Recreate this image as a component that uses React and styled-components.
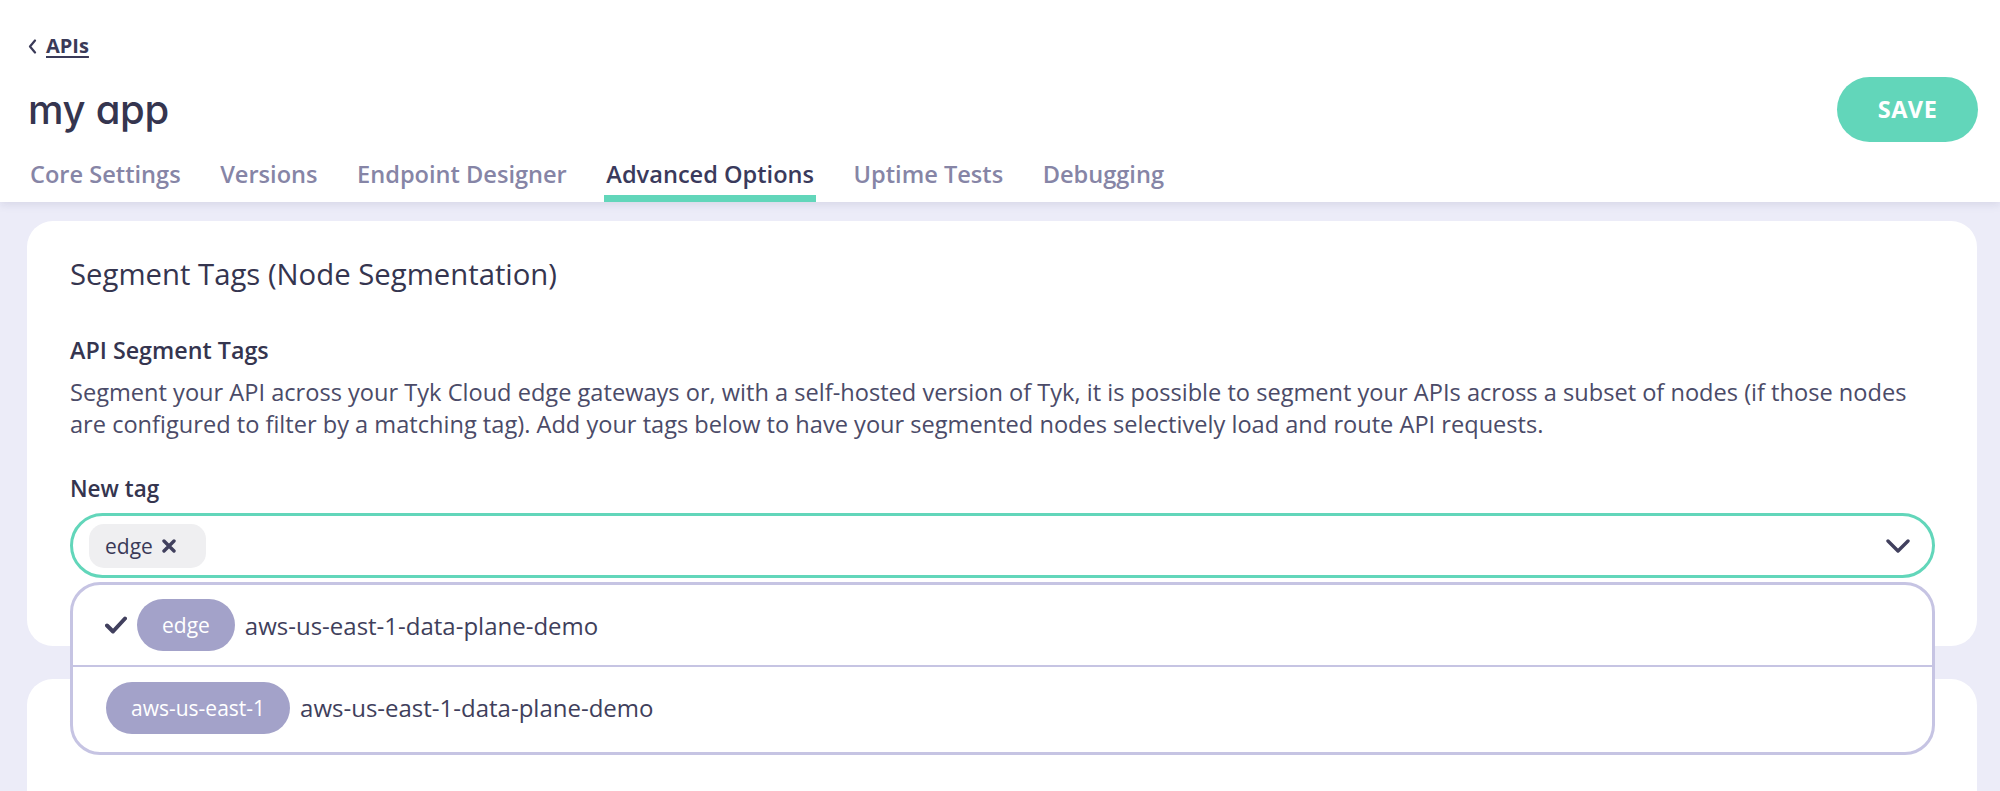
import React from "react";
import styled, { createGlobalStyle } from "styled-components";

const GlobalStyle = createGlobalStyle`
  html, body {
    margin: 0;
    padding: 0;
    background: #ececf8;
    font-family: "Open Sans", "Noto Sans", sans-serif;
    color: #3a3a58;
  }
  * { box-sizing: border-box; }
`;

const Page = styled.div`
  width: 2000px;
  height: 791px;
  overflow: hidden;
  background: #ececf8;
`;

const Header = styled.header`
  position: relative;
  z-index: 2;
  background: #fff;
  padding: 35px 22px 0 28px;
  box-shadow: 0 3px 8px rgba(70, 70, 120, 0.12);
  display: flex;
  flex-direction: column;
`;

const BackLink = styled.a`
  display: inline-flex;
  align-items: center;
  gap: 9px;
  align-self: flex-start;
  font-size: 20px;
  font-weight: 700;
  line-height: 22px;
  color: #3a3a58;
  text-decoration: underline;
  text-underline-offset: 3px;
  text-decoration-thickness: 1.5px;
`;

const TitleRow = styled.div`
  display: flex;
  align-items: center;
  justify-content: space-between;
  margin-top: 19px;
  height: 66px;
`;

const Title = styled.h1`
  margin: 0;
  font-family: "Inter", "Lato", sans-serif;
  font-feature-settings: "cv11" 1;
  font-weight: 500;
  font-size: 40px;
  letter-spacing: -0.3px;
  color: #35354f;
`;

const SaveButton = styled.button`
  width: 141px;
  height: 65px;
  border: none;
  border-radius: 33px;
  background: #62d6ba;
  color: #fff;
  font-family: "Open Sans", sans-serif;
  font-weight: 700;
  font-size: 23.5px;
  letter-spacing: 0.5px;
  cursor: pointer;
`;

const Tabs = styled.nav`
  display: flex;
  gap: 35.5px;
  margin-top: 17px;
`;

const Tab = styled.div`
  font-size: 23.6px;
  font-weight: 600;
  color: ${(p) => (p.$active ? "#3a3a5c" : "#8685a6")};
  padding: 0 2px 6px;
  border-bottom: 7px solid ${(p) => (p.$active ? "#62d6ba" : "transparent")};
  line-height: 30px;
`;

const Content = styled.main`
  display: flex;
  flex-direction: column;
  gap: 33px;
  padding: 19px 23px 0 27px;
`;

const Card = styled.section`
  background: #fff;
  border-radius: 26px;
  padding: ${(p) => p.$pad || "35px 42px 68px 43px"};
  position: relative;
  z-index: ${(p) => p.$z || 0};
`;

const CardTitle = styled.h2`
  margin: 0;
  font-size: 29.3px;
  font-weight: 500;
  line-height: 36px;
  color: #35354f;
`;

const SubTitle = styled.h3`
  margin: 43px 0 0;
  font-size: 23.3px;
  font-weight: 600;
  line-height: 30px;
  color: #35354f;
`;

const Description = styled.p`
  margin: 11px 0 0;
  font-size: 23.6px;
  line-height: 32px;
  color: #4b4b68;
`;

const FieldLabel = styled.label`
  display: block;
  margin-top: 34px;
  font-size: 22.5px;
  font-weight: 600;
  line-height: 30px;
  color: #35354f;
`;

const SelectWrap = styled.div`
  position: relative;
  margin-top: 9px;
`;

const SelectBox = styled.div`
  height: 65px;
  border: 3px solid #62d6ba;
  border-radius: 33px;
  display: flex;
  align-items: center;
  justify-content: space-between;
  padding: 0 22px 0 16px;
`;

const Chip = styled.span`
  display: inline-flex;
  align-items: center;
  gap: 9px;
  height: 44px;
  padding: 0 30px 0 16px;
  border-radius: 15px;
  background: #efeff1;
  font-size: 21px;
  color: #3a3a58;
`;

const Menu = styled.div`
  position: absolute;
  left: 0;
  right: 0;
  top: 69px;
  background: #fff;
  border: 3px solid #c6c4e3;
  border-radius: 30px;
  overflow: hidden;
  z-index: 5;
`;

const Option = styled.div`
  display: flex;
  align-items: center;
  gap: 10px;
  height: ${(p) => (p.$first ? "80px" : "87px")};
  padding: ${(p) => (p.$first ? "0 0 0 32px" : "0 0 4px 33px")};
  border-top: ${(p) => (p.$first ? "none" : "2px solid #c6c4e3")};
`;

const Pill = styled.span`
  display: inline-flex;
  align-items: center;
  justify-content: center;
  height: 52px;
  padding: 0 25px;
  border-radius: 26px;
  background: #a3a2c9;
  color: #fff;
  font-size: 21px;
`;

const OptionText = styled.span`
  font-size: 24px;
  font-weight: 500;
  color: #3f3f5c;
`;

const SecondTitle = styled.h2`
  margin: 0;
  font-size: 29px;
  font-weight: 500;
  line-height: 36px;
  color: #35354f;
`;

const Chevron = () => (
  <svg width="24" height="14" viewBox="0 0 24 14" fill="none">
    <path d="M2 2l10 10L22 2" stroke="#41405e" strokeWidth="3.4" strokeLinecap="round" strokeLinejoin="round" />
  </svg>
);

const Check = () => (
  <svg width="22" height="18" viewBox="0 0 22 18" fill="none">
    <path d="M2 9.5l6 6L20 2.5" stroke="#41405e" strokeWidth="4" strokeLinecap="round" strokeLinejoin="round" />
  </svg>
);

const Cross = () => (
  <svg width="14" height="14" viewBox="0 0 14 14" fill="none">
    <path d="M2 2l10 10M12 2L2 12" stroke="#41405e" strokeWidth="3.4" strokeLinecap="round" />
  </svg>
);

const LeftArrow = () => (
  <svg width="9" height="15" viewBox="0 0 9 15" fill="none">
    <path d="M7 1.5L2 7.5l5 6" stroke="#3a3a58" strokeWidth="2.2" strokeLinecap="round" strokeLinejoin="round" />
  </svg>
);

const tabs = ["Core Settings", "Versions", "Endpoint Designer", "Advanced Options", "Uptime Tests", "Debugging"];

export default function App() {
  return (
    <Page>
      <GlobalStyle />
      <Header>
        <BackLink href="#">
          <LeftArrow />
          APIs
        </BackLink>
        <TitleRow>
          <Title>my app</Title>
          <SaveButton>SAVE</SaveButton>
        </TitleRow>
        <Tabs>
          {tabs.map((t) => (
            <Tab key={t} $active={t === "Advanced Options"}>
              {t}
            </Tab>
          ))}
        </Tabs>
      </Header>
      <Content>
        <Card $z={3}>
          <CardTitle>Segment Tags (Node Segmentation)</CardTitle>
          <SubTitle>API Segment Tags</SubTitle>
          <Description>
            Segment your API across your Tyk Cloud edge gateways or, with a self-hosted version of Tyk, it is possible
            to segment your APIs across a subset of nodes (if those nodes are configured to filter by a matching tag).
            Add your tags below to have your segmented nodes selectively load and route API requests.
          </Description>
          <FieldLabel>New tag</FieldLabel>
          <SelectWrap>
            <SelectBox>
              <Chip>
                edge <Cross />
              </Chip>
              <Chevron />
            </SelectBox>
            <Menu>
              <Option $first>
                <Check />
                <Pill>edge</Pill>
                <OptionText>aws-us-east-1-data-plane-demo</OptionText>
              </Option>
              <Option>
                <Pill>aws-us-east-1</Pill>
                <OptionText>aws-us-east-1-data-plane-demo</OptionText>
              </Option>
            </Menu>
          </SelectWrap>
        </Card>
        <Card $pad="34px 42px 80px 43px">
          <SecondTitle>Webhooks</SecondTitle>
        </Card>
      </Content>
    </Page>
  );
}
